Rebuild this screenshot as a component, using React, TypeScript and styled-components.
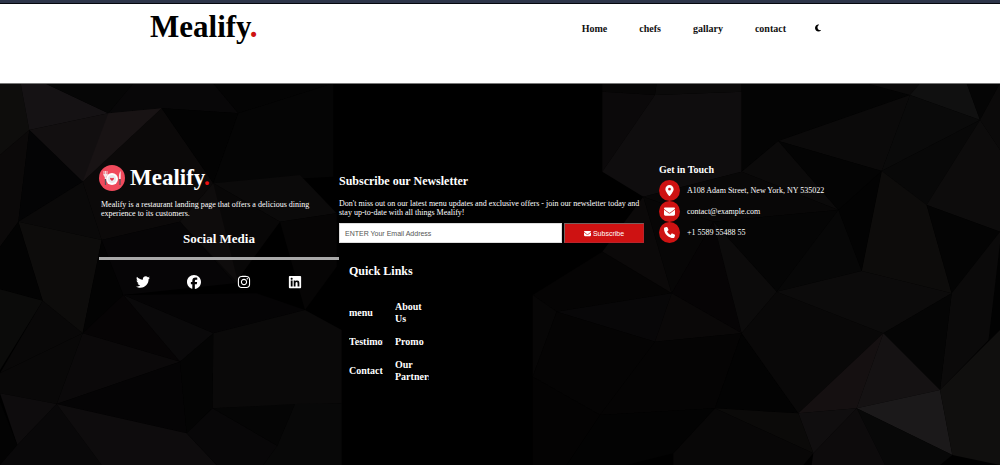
import React from "react";
import styled, { createGlobalStyle } from "styled-components";
import {
  FaEnvelope,
  FaFacebook,
  FaInstagram,
  FaLinkedin,
  FaLocationDot,
  FaMoon,
  FaPhone,
  FaTwitter,
} from "react-icons/fa6";

const GlobalStyle = createGlobalStyle`
  * { box-sizing: border-box; margin: 0; padding: 0; }
  body {
    background: #fff;
    font-family: "Liberation Serif", "Times New Roman", serif;
  }
  a { color: inherit; text-decoration: none; }
  ul { list-style: none; }
`;

const Page = styled.div`
  display: flex;
  flex-direction: column;
  min-height: 100vh;
`;

const Header = styled.header`
  display: flex;
  justify-content: space-between;
  align-items: flex-start;
  height: 84px;
  padding: 5px 178px 0 15%;
  border-top: 3px solid #2d3549;
  border-bottom: 1px solid #777;
  box-shadow: inset 0 1px 0 #05070d;
`;

const Brand = styled.a<{ $size: number; $dot: string }>`
  font-size: ${(p) => p.$size}px;
  line-height: 38px;
  font-weight: bold;
  span { color: ${(p) => p.$dot}; }
`;

const Nav = styled.nav`
  display: flex;
  align-items: center;
  gap: 32px;
  height: 40px;
  color: #111;
  font-size: 10px;
  font-weight: bold;
`;

const ThemeButton = styled.button`
  display: flex;
  margin-left: -4px;
  border: 0;
  background: none;
  color: #000;
  font-size: 8px;
`;

const Footer = styled.footer`
  position: relative;
  flex: 1;
  padding: 80px 101px 72px 99px;
  background: #000;
  color: #fff;
`;

const Backdrop = styled.svg`
  position: absolute;
  inset: 0;
  width: 100%;
  height: 100%;
`;

const Columns = styled.div`
  position: relative;
  display: grid;
  grid-template-columns: 3fr 4fr 3fr;
`;

const BrandRow = styled.div`
  display: flex;
  align-items: center;
  gap: 5px;
  height: 27px;
`;

const About = styled.p`
  padding: 9px 2px 0;
  font-size: 8px;
  line-height: 9px;
`;

const Heading = styled.h2<{ $size: number }>`
  font-size: ${(p) => p.$size}px;
  line-height: 16px;
`;

const SocialHeading = styled(Heading)`
  margin-top: 13px;
  padding-bottom: 10px;
  border-bottom: 3px solid #a9a9a9;
  text-align: center;
`;

const ContactHeading = styled(Heading)`
  padding-bottom: 4px;
  line-height: 12px;
`;

const SocialList = styled.ul`
  display: flex;
  justify-content: space-between;
  padding: 15px 37px 0;
  font-size: 14px;
  a { display: flex; }
`;

const Newsletter = styled.section`
  padding-top: 9px;
`;

const NewsText = styled.p`
  margin-top: 10px;
  padding-right: 12px;
  font-size: 8px;
  line-height: 9px;
`;

const Form = styled.form`
  display: flex;
  gap: 2px;
  margin: 6px 15px 0 0;
  height: 20px;
`;

const EmailInput = styled.input`
  flex: 1;
  min-width: 0;
  padding: 0 5px;
  border: 1px solid #ddd;
  background: #fff;
  font: 7px "Liberation Sans", Arial, sans-serif;
  &::placeholder { color: #555; opacity: 1; }
`;

const SubscribeButton = styled.button`
  display: flex;
  justify-content: center;
  align-items: center;
  gap: 2px;
  width: 80px;
  border: 1px solid #b9232b;
  border-top-color: #77615f;
  border-left-color: #77615f;
  background: #ce1212;
  color: #fff;
  font: 7px "Liberation Sans", Arial, sans-serif;
`;

const LinksSection = styled.section`
  padding: 20px 10px 0;
`;

const LinkGrid = styled.ul`
  display: grid;
  grid-template-columns: 34px 34px;
  gap: 11px 12px;
  align-items: center;
  margin-top: 22px;
  font-size: 10px;
  line-height: 12px;
  font-weight: bold;
  li { overflow: hidden; }
`;

const ContactRow = styled.li`
  display: flex;
  align-items: center;
  gap: 7px;
  font-size: 8px;
`;

const ContactIcon = styled.span`
  display: flex;
  justify-content: center;
  align-items: center;
  width: 21px;
  height: 21px;
  border-radius: 50%;
  background: #ce1212;
  font-size: 11px;
`;

const facets: [string, string][] = [
  ["0,10 62,10 88,150 0,225", "#0e0d0c"],
  ["62,10 135,10 325,100 88,150", "#151214"],
  ["135,10 400,10 325,100", "#060606"],
  ["400,10 640,10 715,100 485,85 325,100", "#080708"],
  ["640,10 1000,10 715,100", "#040404"],
  ["88,150 325,100 485,85 248,305", "#120f10"],
  ["325,100 485,85 248,305", "#181314"],
  ["0,225 88,150 55,425 0,500", "#0b0909"],
  ["88,150 248,305 55,425", "#040405"],
  ["248,305 485,85 640,310 540,425 305,480", "#0b0909"],
  ["485,85 715,100 640,310", "#030303"],
  ["715,100 1000,10 1000,290 640,310", "#050505"],
  ["640,310 900,285 1010,400 840,425", "#0b0a0a"],
  ["640,310 840,425 705,610 540,425", "#080707"],
  ["540,425 640,310 715,610", "#0e0c0c"],
  ["840,425 1010,400 1010,560 915,690", "#060505"],
  ["55,425 248,305 305,480", "#0a0909"],
  ["55,425 305,480 248,760 128,662", "#0d0c0b"],
  ["0,500 55,425 128,662 0,628", "#030303"],
  ["305,480 370,645 248,760", "#030303"],
  ["305,480 540,425 705,610 370,645", "#060506"],
  ["0,628 128,662 0,870", "#0b0b0a"],
  ["128,662 248,760 0,880", "#090808"],
  ["370,645 770,640 915,690 640,760", "#050405"],
  ["370,645 640,760 540,845", "#0a090a"],
  ["370,645 540,845 248,760", "#060405"],
  ["248,760 540,845 170,972", "#0b090a"],
  ["0,880 248,760 170,972 0,940", "#090808"],
  ["0,940 170,972 52,1095", "#0e0c0d"],
  ["0,965 52,1095 0,1155", "#030303"],
  ["170,972 540,845 560,1060", "#050405"],
  ["540,845 640,760 638,985 560,1060", "#040404"],
  ["640,760 915,690 1025,750 1025,970 638,985", "#0a0909"],
  ["52,1095 170,972 305,1155 0,1155", "#090809"],
  ["170,972 560,1060 650,1155 305,1155", "#0e0c0d"],
  ["638,985 832,1097 790,1155 650,1155 560,1060", "#080708"],
  ["638,985 885,972 832,1097", "#050505"],
  ["885,972 1025,970 1025,1155 790,1155 832,1097", "#080808"],
  ["1807,10 1970,10 1965,45 1807,35", "#070606"],
  ["1807,35 1965,45 1807,275", "#0b090a"],
  ["1965,45 2225,35 2225,275 1930,350 1807,275", "#0f0d0e"],
  ["1970,10 2225,10 2225,35 1965,45", "#0b0a0a"],
  ["2225,10 2600,10 2730,45 2335,183 2225,275", "#040404"],
  ["2600,10 2760,10 2730,45", "#0b0a0a"],
  ["2335,183 2730,45 2645,273", "#0b0a0a"],
  ["2760,10 2900,10 2940,120 2730,45", "#101010"],
  ["2730,45 2940,120 2645,273", "#0a0a0a"],
  ["2900,10 3000,10 2940,120", "#050505"],
  ["2940,120 3000,10 3000,210", "#0b0a0a"],
  ["2645,273 2940,120 2780,375", "#080808"],
  ["2940,120 3000,210 3000,455 2780,375", "#0d0c0c"],
  ["2335,183 2515,390 2225,275", "#0b0a0a"],
  ["2335,183 2645,273 2515,390", "#040404"],
  ["2645,273 2780,375 2855,640 2585,573", "#0d0c0b"],
  ["2515,390 2645,273 2585,573", "#030303"],
  ["2780,375 3000,455 2855,640", "#040404"],
  ["1930,350 2225,275 2515,390 2140,425", "#080707"],
  ["2140,425 2515,390 2330,635", "#050505"],
  ["2515,390 2585,573 2330,635", "#070707"],
  ["1807,515 1930,350 2015,640", "#0b0909"],
  ["1930,350 2140,425 2015,640", "#070606"],
  ["2140,425 2225,760 2015,640", "#060405"],
  ["2140,425 2330,635 2225,760", "#0c0b0b"],
  ["1598,645 1807,515 2015,640 1670,695", "#050404"],
  ["1670,695 2015,640 1965,785", "#080708"],
  ["2015,640 2225,760 1965,785", "#0a0808"],
  ["1598,645 1670,695 1598,890", "#070606"],
  ["1598,890 1670,695 1965,785 1800,1005", "#050404"],
  ["1965,785 2225,760 2145,985 1800,1005", "#050404"],
  ["2225,760 2395,1000 2145,985", "#030303"],
  ["2225,760 2330,635 2650,760 2395,1000", "#090808"],
  ["2330,635 2585,573 2855,640 2650,760", "#0c0b0b"],
  ["2855,640 3000,455 3000,745 2820,930", "#0b0a0a"],
  ["2965,785 3000,490 3000,750", "#020202"],
  ["2650,760 2855,640 2820,930", "#050505"],
  ["2395,1000 2650,760 2570,985", "#151011"],
  ["2650,760 2820,930 2570,985", "#151213"],
  ["2570,985 2820,930 2857,1125", "#1b191a"],
  ["2820,930 3000,750 3000,1155 2857,1125", "#100f0e"],
  ["2570,985 2857,1125 2820,1155 2655,1155", "#080808"],
  ["2395,1000 2570,985 2440,1120", "#100e0f"],
  ["2440,1120 2570,985 2655,1155 2435,1155", "#0d0b0c"],
  ["2145,985 2395,1000 2440,1120", "#0b0a09"],
  ["2020,1120 2145,985 2440,1120 2410,1155 2020,1155", "#080707"],
  ["1598,890 1800,1005 1700,1155 1598,1155", "#040303"],
  ["1800,1005 2145,985 2020,1120 1880,1155 1700,1155", "#030303"],
];

const PlateLogo = () => (
  <svg width="26" height="26" viewBox="0 0 26 26" aria-hidden="true">
    <circle cx="13" cy="13" r="13" fill="#f04a5c" />
    <circle cx="13" cy="14" r="6" fill="#fff" />
    <circle cx="13" cy="14" r="4" fill="#e9e9ed" />
    <path d="M13 16 11.2 14.3Q10.6 13 11.8 12.7Q12.7 12.7 13 13.4Q13.3 12.7 14.2 12.7Q15.4 13 14.8 14.3Z" fill="#e83248" />
    <path d="M5 6v4M6.5 6v4M8 6v4" stroke="#f3e6e8" strokeWidth="0.9" />
    <path d="M4.5 9h4q0 2.5-1.3 3v2H5.8v-2Q4.5 11.5 4.5 9Z" fill="#f3e6e8" />
    <path d="M6.5 14v6M21 14v6" stroke="#59555d" strokeWidth="1.3" />
    <path d="M21.7 6v8h-1.8q-.3-6 1.8-8Z" fill="#f3e6e8" />
  </svg>
);

const socials = [
  { name: "Twitter", Icon: FaTwitter },
  { name: "Facebook", Icon: FaFacebook },
  { name: "Instagram", Icon: FaInstagram },
  { name: "LinkedIn", Icon: FaLinkedin },
];

const contacts = [
  { text: "A108 Adam Street, New York, NY 535022", Icon: FaLocationDot },
  { text: "contact@example.com", Icon: FaEnvelope },
  { text: "+1 5589 55488 55", Icon: FaPhone },
];

const quickLinks = ["menu", "About Us", "Testimonials", "Promo", "Contact", "Our Partners"];

export default function App() {
  return (
    <Page>
      <GlobalStyle />
      <Header>
        <Brand href="#" $size={31} $dot="#ce1212">
          Mealify<span>.</span>
        </Brand>
        <Nav>
          {["Home", "chefs", "gallary", "contact"].map((item) => (
            <a key={item} href={`#${item}`}>{item}</a>
          ))}
          <ThemeButton type="button" aria-label="Toggle dark mode">
            <FaMoon />
          </ThemeButton>
        </Nav>
      </Header>
      <Footer>
        <Backdrop viewBox="0 12 3000 1143" preserveAspectRatio="xMidYMid slice" aria-hidden="true">
          {facets.map(([points, fill]) => (
            <polygon key={points} points={points} fill={fill} />
          ))}
        </Backdrop>
        <Columns>
          <section>
            <BrandRow>
              <PlateLogo />
              <Brand href="#" $size={23} $dot="#f01010">
                Mealify<span>.</span>
              </Brand>
            </BrandRow>
            <About>
              Mealify is a restaurant landing page that offers a delicious dining experience to its customers.
            </About>
            <SocialHeading $size={13}>Social Media</SocialHeading>
            <SocialList>
              {socials.map(({ name, Icon }) => (
                <li key={name}>
                  <a href={`#${name}`} aria-label={name}><Icon /></a>
                </li>
              ))}
            </SocialList>
          </section>
          <div>
            <Newsletter>
              <Heading $size={12}>Subscribe our Newsletter</Heading>
              <NewsText>
                Don't miss out on our latest menu updates and exclusive offers - join our newsletter today and
                stay up-to-date with all things Mealify!
              </NewsText>
              <Form onSubmit={(e) => e.preventDefault()}>
                <EmailInput type="email" aria-label="Email address" placeholder="ENTER Your Email Address" />
                <SubscribeButton type="submit"><FaEnvelope />Subscribe</SubscribeButton>
              </Form>
            </Newsletter>
            <LinksSection>
              <Heading $size={12}>Quick Links</Heading>
              <LinkGrid>
                {quickLinks.map((item) => (
                  <li key={item}><a href={`#${item}`}>{item}</a></li>
                ))}
              </LinkGrid>
            </LinksSection>
          </div>
          <section>
            <ContactHeading $size={10}>Get in Touch</ContactHeading>
            <ul>
              {contacts.map(({ text, Icon }) => (
                <ContactRow key={text}>
                  <ContactIcon><Icon /></ContactIcon>
                  {text}
                </ContactRow>
              ))}
            </ul>
          </section>
        </Columns>
      </Footer>
    </Page>
  );
}
